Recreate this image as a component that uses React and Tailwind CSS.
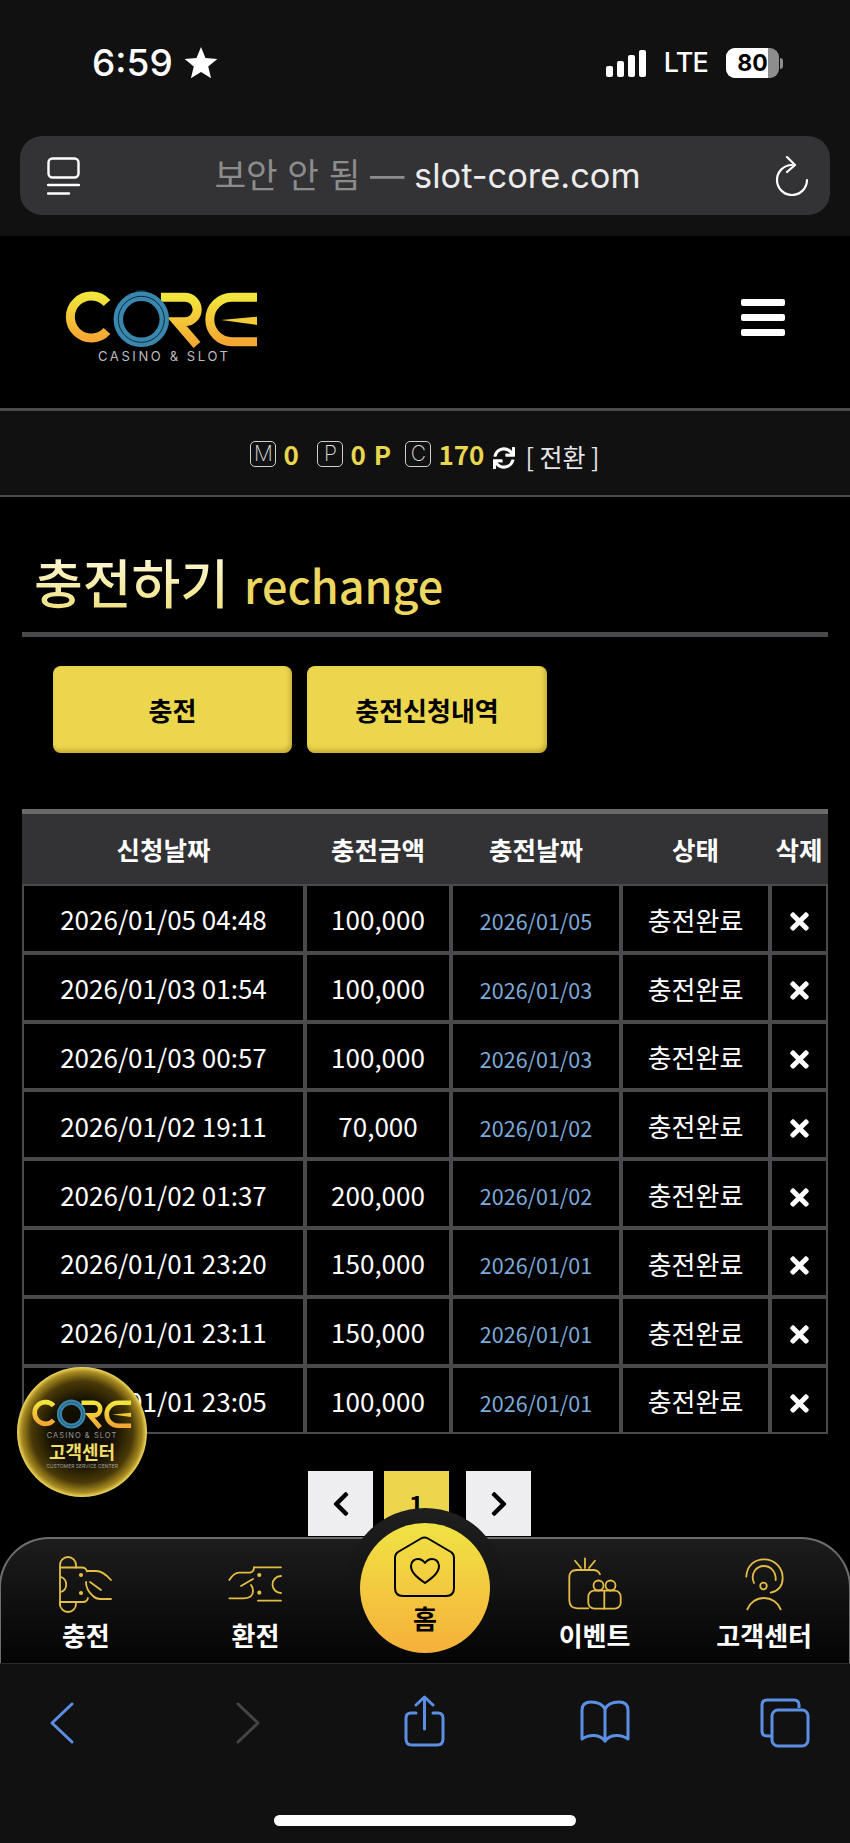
import { FaTimes, FaChevronLeft, FaChevronRight, FaSync } from 'react-icons/fa';

const rows = [
  ['2026/01/05 04:48', '100,000', '2026/01/05'],
  ['2026/01/03 01:54', '100,000', '2026/01/03'],
  ['2026/01/03 00:57', '100,000', '2026/01/03'],
  ['2026/01/02 19:11', '70,000', '2026/01/02'],
  ['2026/01/02 01:37', '200,000', '2026/01/02'],
  ['2026/01/01 23:20', '150,000', '2026/01/01'],
  ['2026/01/01 23:11', '150,000', '2026/01/01'],
  ['2026/01/01 23:05', '100,000', '2026/01/01'],
];

// logo: drawn strokes, viewBox is 194x60
function CoreLogo({ className, id }) {
  return (
    <svg viewBox="0 0 194 60" className={className} role="img" aria-label="CORE">
      <defs>
        <linearGradient id={id} x1="0" y1="0" x2="0" y2="1">
          <stop offset="0" stopColor="#f2e53c" />
          <stop offset="1" stopColor="#f5a733" />
        </linearGradient>
      </defs>
      <circle cx="76" cy="2" r="5" fill="#3f8fb8" opacity="0.25" />
      <g fill="none" stroke={`url(#${id})`} strokeWidth="9">
        <path d="M42 13 A21 21 0 1 0 42 41" />
        <path d="M96 7.3 H120 A12.2 12.2 0 0 1 120 31.7 H112 L132 55" />
        <path d="M192 7.3 H167 A22.2 22.2 0 0 0 167 51.7 H192" />
      </g>
      <path d="M156 30 L192 26.7 V35 Z" fill="#f4c936" />
      <circle cx="76.3" cy="29.3" r="23" fill="none" stroke="#3a87ae" strokeWidth="9.5" />
      <circle cx="76.3" cy="29.3" r="23" fill="none" stroke="#0b2a3a" strokeWidth="1" />
    </svg>
  );
}

function NavIcon({ children }) {
  return (
    <svg viewBox="0 0 60 60" className="w-[60px] h-[60px]" fill="none" stroke="#e3bd45" strokeWidth="1.8" strokeLinecap="round" strokeLinejoin="round">
      {children}
    </svg>
  );
}

function NavItem({ label, children }) {
  return (
    <div className="flex flex-col items-center pt-[16px]">
      <NavIcon>{children}</NavIcon>
      <span className="text-[26px] leading-[34px] font-bold text-white mt-[3px]">{label}</span>
    </div>
  );
}

function Badge({ children }) {
  return (
    <span className="w-[26px] h-[26px] border border-[#cfcfcf] rounded-[5px] flex items-center justify-center text-[21px] font-extralight text-[#dcdcdc] font-['Inter',sans-serif]">
      {children}
    </span>
  );
}

export default function App() {
  return (
    <div className="relative w-[850px] h-[1843px] overflow-hidden bg-black flex flex-col font-['Noto_Sans_CJK_KR','Noto_Sans',sans-serif]">
      {/* ios status + address bar */}
      <div className="h-[236px] shrink-0 bg-[#111112] px-[20px]">
        <div className="h-[136px] flex justify-between items-start pt-[45px]">
          <div className="flex items-center pl-[72px] gap-[11px] text-white">
            <span className="font-['Inter',sans-serif] text-[37px] leading-[36px] font-medium">6:59</span>
            <svg viewBox="0 0 32 32" className="w-[34px] h-[34px]" fill="white">
              <path d="M16 1 L20.2 11.4 L31.4 12.2 L22.8 19.4 L25.5 30.3 L16 24.4 L6.5 30.3 L9.2 19.4 L.6 12.2 L11.8 11.4 Z" />
            </svg>
          </div>
          <div className="flex items-center pr-[47px] pt-[3px]">
            <div className="flex items-end gap-[4px] h-[27px]">
              <div className="w-[7px] h-[11px] rounded-[2px] bg-white" />
              <div className="w-[7px] h-[16px] rounded-[2px] bg-white" />
              <div className="w-[7px] h-[22px] rounded-[2px] bg-white" />
              <div className="w-[7px] h-[27px] rounded-[2px] bg-white" />
            </div>
            <span className="ml-[18px] font-['Inter',sans-serif] text-[27px] leading-[30px] font-medium text-white tracking-[-0.8px]">LTE</span>
            <div className="ml-[18px] relative w-[53px] h-[30px] rounded-[9px] bg-[#8d8d8d] overflow-hidden">
              <div className="absolute inset-y-0 left-0 w-[42px] bg-white" />
              <span className="absolute inset-0 flex items-center justify-center font-['Inter',sans-serif] text-[23px] font-bold text-black">80</span>
            </div>
            <div className="w-[3px] h-[11px] rounded-r-sm bg-[#8d8d8d] ml-[1px]" />
          </div>
        </div>
        <div className="h-[79px] rounded-[22px] bg-[#333335] flex items-center justify-between pl-[27px] pr-[21px]">
          <svg viewBox="0 0 33 38" className="w-[33px] h-[38px]" fill="none" stroke="white" strokeWidth="2.4" strokeLinecap="round">
            <rect x="1.5" y="1.5" width="30" height="19" rx="4" />
            <path d="M1 28 H32" />
            <path d="M1 36.5 H22" />
          </svg>
          <div className="text-[34.4px] leading-[40px] font-['Inter','Noto_Sans_CJK_KR',sans-serif] whitespace-nowrap">
            <span className="text-[#8c8c8c]">보안 안 됨 — </span>
            <span className="text-[#ececec]">slot-core.com</span>
          </div>
          <svg viewBox="0 0 34 40" className="w-[34px] h-[40px]" fill="none" stroke="white" strokeWidth="2.2" strokeLinecap="round" strokeLinejoin="round">
            <path d="M17 9 A15 15 0 1 0 32 24" />
            <path d="M12 1 L20 9 L12 16" />
          </svg>
        </div>
      </div>

      <div className="relative flex-1 min-h-0 overflow-hidden">
        {/* header */}
        <div className="h-[172px] flex justify-between pl-[64px] pr-[65px] pt-[54px]">
          <div className="flex flex-col">
            <CoreLogo className="w-[196px] h-[60px]" id="logoMain" />
            <span className="ml-[34px] text-[13px] leading-[12px] font-['Inter',sans-serif] text-[#bdbdbd] tracking-[0.2em] whitespace-nowrap">CASINO &amp; SLOT</span>
          </div>
          <div className="flex flex-col gap-[8px] pt-[9px]">
            <div className="w-[44px] h-[7px] rounded-[2px] bg-white" />
            <div className="w-[44px] h-[7px] rounded-[2px] bg-white" />
            <div className="w-[44px] h-[7px] rounded-[2px] bg-white" />
          </div>
        </div>

        {/* points */}
        <div className="h-[89px] border-t-[3px] border-b-[2px] border-[#4a4a4a] bg-[#111112] flex items-center justify-center pt-[1px]">
          <Badge>M</Badge>
          <span className="ml-[7px] w-[34px] text-[26px] leading-[30px] font-bold text-[#e9d64e]">0</span>
          <Badge>P</Badge>
          <span className="ml-[7px] w-[55px] text-[26px] leading-[30px] font-bold text-[#e9d64e] tracking-[1px] whitespace-nowrap">0 P</span>
          <Badge>C</Badge>
          <span className="ml-[7px] text-[26px] leading-[30px] font-bold text-[#e9d64e]">170</span>
          <FaSync className="ml-[8px] mt-[8px] w-[24px] h-[22px] text-white" />
          <span className="ml-[9px] mt-[4px] text-[25px] leading-[30px] text-[#e6e6e6] whitespace-nowrap">[ 전환 ]</span>
        </div>

        {/* title */}
        <div className="mx-[22px] h-[140px] border-b-[5px] border-[#4a4a4c] pt-[50px] pl-[12px] flex items-baseline whitespace-nowrap">
          <span className="text-[53px] leading-[68px] font-medium bg-gradient-to-b from-[#fffbe0] to-[#efdf78] bg-clip-text text-transparent">충전하기</span>
          <span className="ml-[15px] text-[45px] leading-[68px] font-medium text-[#ecd860]">rechange</span>
        </div>

        {/* tabs */}
        <div className="flex gap-[15px] pl-[53px] mt-[29px]">
          <button className="w-[239px] h-[87px] rounded-[8px] bg-[#ebd64e] shadow-[inset_-2px_-3px_4px_rgba(150,120,20,0.45)] text-[26px] font-bold text-black">충전</button>
          <button className="w-[240px] h-[87px] rounded-[8px] bg-[#ebd64e] shadow-[inset_-2px_-3px_4px_rgba(150,120,20,0.45)] text-[26px] font-bold text-black">충전신청내역</button>
        </div>

        {/* history table */}
        <table className="ml-[22px] mt-[56px] w-[806px] table-fixed border-separate border-spacing-0 text-white">
          <colgroup>
            <col className="w-[283px]" />
            <col className="w-[146px]" />
            <col className="w-[170px]" />
            <col className="w-[149px]" />
            <col className="w-[58px]" />
          </colgroup>
          <thead>
            <tr className="h-[75px] bg-[#333335] text-[25.5px] font-bold">
              <th className="border-t-[5px] border-[#6a6a6a] font-bold">신청날짜</th>
              <th className="border-t-[5px] border-[#6a6a6a] font-bold">충전금액</th>
              <th className="border-t-[5px] border-[#6a6a6a] font-bold">충전날짜</th>
              <th className="border-t-[5px] border-[#6a6a6a] font-bold">상태</th>
              <th className="border-t-[5px] border-[#6a6a6a] font-bold whitespace-nowrap">삭제</th>
            </tr>
          </thead>
          <tbody>
            {rows.map((r) => (
              <tr key={r[0]} className="h-[68.8px] text-center text-[26px]">
                <td className="border-2 border-[#4a4a4c] p-0 pt-[1px]">{r[0]}</td>
                <td className="border-2 border-[#4a4a4c] p-0 pt-[1px]">{r[1]}</td>
                <td className="border-2 border-[#4a4a4c] p-0 pt-[6px] text-[21.5px] text-[#7cabd9]">{r[2]}</td>
                <td className="border-2 border-[#4a4a4c] p-0 pt-[2px]">충전완료</td>
                <td className="border-2 border-[#4a4a4c] p-0">
                  <FaTimes className="mx-auto mt-[7px] w-[27px] h-[27px] text-white" />
                </td>
              </tr>
            ))}
          </tbody>
        </table>

        {/* pager, partly under the bottom nav */}
        <div className="flex justify-center mt-[37px] pr-[11px]">
          <div className="w-[65px] h-[65px] bg-[#eeeef0] flex items-center justify-center">
            <FaChevronLeft className="w-[22px] h-[28px] text-black" />
          </div>
          <div className="w-[65px] h-[65px] ml-[11px] bg-[#ebd64e] flex items-center justify-center text-[25px] font-bold text-black">1</div>
          <div className="w-[65px] h-[65px] ml-[17px] bg-[#eeeef0] flex items-center justify-center">
            <FaChevronRight className="w-[22px] h-[28px] text-black" />
          </div>
        </div>

        {/* floating support badge */}
        <div className="absolute left-[17px] bottom-[166px] w-[130px] h-[130px] rounded-full bg-[radial-gradient(circle_closest-side,#0a0800_0%,#161100_50%,#4a3a08_78%,#a88a20_93%,#f0d860_100%)] flex flex-col items-center pt-[32px]">
          <CoreLogo className="w-[102px] h-[31px]" id="logoBadge" />
          <span className="mt-[1px] text-[7.5px] leading-[9px] font-['Inter',sans-serif] tracking-[0.14em] text-[#9a9a9a] whitespace-nowrap">CASINO &amp; SLOT</span>
          <span className="text-[18px] leading-[22px] font-bold text-[#efdc6a]">고객센터</span>
          <span className="mt-[1px] text-[5px] leading-[7px] font-['Inter',sans-serif] text-[#a0a0a0] whitespace-nowrap">CUSTOMER SERVICE CENTER</span>
        </div>

        {/* bottom nav */}
        <div className="absolute inset-x-0 bottom-0 h-[126px] rounded-t-[50px] border-t-2 border-x-2 border-[#6e6e6e] bg-gradient-to-b from-[#1d1d1d] to-[#050505] grid grid-cols-5 -mx-[1px]">
          <NavItem label="충전">
            <path d="M4 50 V10 a8 8 0 0 1 16 0 v2.5" />
            <path d="M4 47 v2 a8 8 0 0 0 16 0 v-2" />
            <path d="M4 12.5 H26 q4 0 5 4" />
            <path d="M4 47 H27 q4 0 5-4" />
            <path d="M5 22 a8 8 0 0 1 0 15" />
            <path d="M31 16 H40 q7 0 15 9" />
            <path d="M30 27 q0 8 7 14 q3 3 7 3 H55" />
            <path d="M34 27 L45 35" />
            <circle cx="25" cy="20" r="1.2" fill="#e3bd45" />
            <circle cx="25" cy="38" r="1.2" fill="#e3bd45" />
          </NavItem>
          <NavItem label="환전">
            <path d="M29 12.3 H56" />
            <path d="M33 45.7 H56" />
            <path d="M56 21 A8.5 8.5 0 0 0 56 38" />
            <path d="M4.3 25 Q9 17.7 14 17.7 H25 Q29 17 29 12.3" />
            <path d="M4.3 43.3 H19 Q28 43 28 36 Q28 32 26 30" />
            <path d="M16 31 L28 24" />
            <circle cx="34.3" cy="20" r="1.2" fill="#e3bd45" />
            <circle cx="34.3" cy="37.7" r="1.2" fill="#e3bd45" />
          </NavItem>
          <div />
          <NavItem label="이벤트">
            <path d="M35 19.3 Q33 15 28.3 15 H11.7 Q4.3 15 4.3 22.3 V45 Q4.3 53.3 12.7 53.3 H23.3" />
            <path d="M20 3.3 V13 M10 5.7 L16 13 M30 5.7 L24 13" />
            <rect x="23.3" y="35.7" width="32.4" height="18" rx="6" />
            <path d="M39.3 35.7 V53.7" />
            <circle cx="33.5" cy="30.5" r="5" />
            <circle cx="45.5" cy="30.5" r="5" />
          </NavItem>
          <NavItem label="고객센터">
            <path d="M12.3 21.7 C13 10 21 4.3 30 4.3 C41 4.3 48.7 13 48.7 23 C48.7 31 44 36 36.7 37.7" />
            <path d="M20 28 C16 19 22 11 30 11 C37 11 42 17 41.7 25" />
            <circle cx="29.5" cy="31" r="3.3" />
            <path d="M13.3 54.3 A18 18 0 0 1 46.7 54.3" />
          </NavItem>
        </div>

        {/* home button sits above the nav */}
        <div className="absolute left-[345px] bottom-[75px] w-[160px] h-[80px] rounded-t-full bg-gradient-to-b from-[#1f1f1f] to-[#131313]" />
        <div className="absolute left-[360px] bottom-[10px] w-[130px] h-[130px] rounded-full bg-gradient-to-b from-[#efe344] to-[#f5b03a] flex flex-col items-center pt-[10px]">
          <svg viewBox="0 0 70 70" className="w-[70px] h-[70px]" fill="none" stroke="black" strokeWidth="2" strokeLinejoin="round">
            <path d="M31 5.5 Q34.5 3.5 38 5.5 L61 19 Q64 21 64 25 V55 Q64 63 56 63 H13 Q5 63 5 55 V25 Q5 21 8 19 Z" />
            <path d="M35 50 C28 45 21 40 21 33 C21 28 25 26 28 26 C31 26 33.5 28 35 30 C36.5 28 39 26 42 26 C45 26 49 28 49 33 C49 40 42 45 35 50Z" />
          </svg>
          <span className="text-[26px] leading-[30px] font-bold text-black">홈</span>
        </div>
      </div>

      {/* safari toolbar */}
      <div className="h-[180px] shrink-0 bg-[#111112] border-t border-[#2a2a2a] flex flex-col">
        <div className="h-[151px] flex items-start pl-[50px] pt-[31px]">
          <svg viewBox="0 0 24 42" className="w-[24px] h-[42px] mt-[7px]" fill="none" stroke="#5b8fe3" strokeWidth="3" strokeLinecap="round" strokeLinejoin="round">
            <path d="M22 2 L2 21 L22 40" />
          </svg>
          <svg viewBox="0 0 24 42" className="w-[24px] h-[42px] mt-[7px] ml-[162px]" fill="none" stroke="#444446" strokeWidth="3" strokeLinecap="round" strokeLinejoin="round">
            <path d="M2 2 L22 21 L2 40" />
          </svg>
          <svg viewBox="0 0 41 52" className="w-[41px] h-[52px] ml-[144px]" fill="none" stroke="#5b8fe3" strokeWidth="3" strokeLinecap="round" strokeLinejoin="round">
            <path d="M12 18 H7 Q2 18 2 23 V44 Q2 50 8 50 H33 Q39 50 39 44 V23 Q39 18 34 18 H29" />
            <path d="M20.5 34 V2 M12 10 L20.5 2 L29 10" />
          </svg>
          <svg viewBox="0 0 52 44" className="w-[52px] h-[44px] mt-[5px] ml-[134px]" fill="none" stroke="#5b8fe3" strokeWidth="3" strokeLinecap="round" strokeLinejoin="round">
            <path d="M26 9 C23 3 17 2 12 2 C6 2 3 5 3 10 V39 C10 34 21 34 26 41 C31 34 42 34 49 39 V10 C49 5 46 2 40 2 C35 2 29 3 26 9 Z" />
            <path d="M26 9 V41" />
          </svg>
          <svg viewBox="0 0 50 50" className="w-[50px] h-[50px] mt-[3px] ml-[129px]" fill="none" stroke="#5b8fe3" strokeWidth="3" strokeLinejoin="round">
            <path d="M39 10 V7 Q39 2 34 2 H7 Q2 2 2 7 V33 Q2 38 7 38 H11" />
            <rect x="12" y="12" width="36" height="36" rx="6" />
          </svg>
        </div>
        <div className="w-[302px] h-[11px] mx-auto rounded-full bg-white" />
      </div>
    </div>
  );
}
